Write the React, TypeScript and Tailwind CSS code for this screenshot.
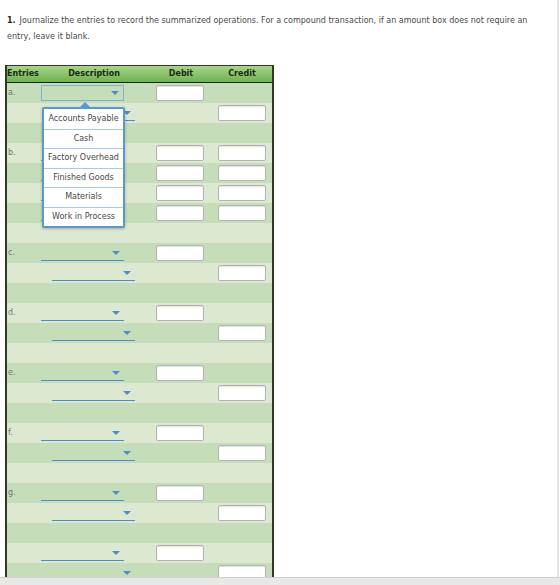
import React from "react";

type Line = { debit: boolean; credit: boolean; indent: boolean };
type Entry = { label: string; lines: Line[]; blank: boolean };

const ACCOUNTS = [
  "Accounts Payable",
  "Cash",
  "Factory Overhead",
  "Finished Goods",
  "Materials",
  "Work in Process",
];

const pair: Line[] = [
  { debit: true, credit: false, indent: false },
  { debit: false, credit: true, indent: true },
];

const ENTRIES: Entry[] = [
  { label: "a.", lines: pair, blank: true },
  {
    label: "b.",
    lines: [0, 1, 2, 3].map(() => ({ debit: true, credit: true, indent: false })),
    blank: true,
  },
  { label: "c.", lines: pair, blank: true },
  { label: "d.", lines: pair, blank: true },
  { label: "e.", lines: pair, blank: true },
  { label: "f.", lines: pair, blank: true },
  { label: "g.", lines: pair, blank: true },
  { label: "", lines: pair, blank: false },
];

const Arrow = () => (
  <span className="h-0 w-0 border-x-[4px] border-t-[4px] border-x-transparent border-t-[#4a8ed0]" />
);

const AmountBox = () => (
  <div className="h-[16px] w-[48px] rounded-[2px] border border-[#b4b4b4] bg-white shadow-[inset_0_1px_1px_rgba(0,0,0,0.12)]" />
);

function AccountMenu() {
  return (
    <div className="absolute left-[1px] top-[22px] z-10 w-[83px]">
      <span className="absolute -top-[5px] left-[38px] h-0 w-0 border-x-[5px] border-b-[5px] border-x-transparent border-b-[#5a98d2]" />
      <ul className="rounded-[2px] border-2 border-[#5a98d2] bg-white shadow-[0_1px_3px_rgba(0,0,0,0.25)]">
        {ACCOUNTS.map((name, i) => (
          <li
            key={name}
            className={`flex h-[19.5px] items-center justify-center text-[8px] text-[#484848] ${
              i > 0 ? "border-t border-[#a9c9e9]" : ""
            }`}
          >
            {name}
          </li>
        ))}
      </ul>
    </div>
  );
}

function Dropdown({ indent, open }: { indent: boolean; open?: boolean }) {
  return (
    <div className={`relative ${indent ? "ml-[14px]" : "ml-[3px]"}`}>
      <div
        className={`flex h-[16px] w-[83px] items-center justify-end pr-[4px] ${
          open ? "border border-[#7fb1df]" : "border-b border-[#4a8ed0]"
        }`}
      >
        <Arrow />
      </div>
      {open && <AccountMenu />}
    </div>
  );
}

export default function App() {
  let rowIndex = 0;
  const rows: React.ReactNode[] = [];

  ENTRIES.forEach((entry, e) => {
    entry.lines.forEach((line, l) => {
      const dark = rowIndex % 2 === 0;
      rows.push(
        <div
          key={`${e}-${l}`}
          className={`grid h-[20px] grid-cols-[31px_112px_62px_60px] items-center ${
            dark ? "bg-[#c6ddba]" : "bg-[#dde8d1]"
          }`}
        >
          <span className="pl-[1px] text-[8px] text-[#757575]">{l === 0 ? entry.label : ""}</span>
          <Dropdown indent={line.indent} open={e === 0 && l === 0} />
          <div className="pl-[6px]">{line.debit && <AmountBox />}</div>
          <div className="pl-[6px]">{line.credit && <AmountBox />}</div>
        </div>
      );
      rowIndex++;
    });
    if (entry.blank) {
      const dark = rowIndex % 2 === 0;
      rows.push(
        <div key={`${e}-blank`} className={`h-[20px] ${dark ? "bg-[#c6ddba]" : "bg-[#dde8d1]"}`} />
      );
      rowIndex++;
    }
  });

  return (
    <div className="flex h-[585px] w-[560px] flex-col bg-white font-['DejaVu_Sans',sans-serif] text-[#333]">
      <div className="flex min-h-0 flex-1">
        <div className="min-w-0 flex-1 overflow-hidden pl-[5px] pt-[13px]">
          <p className="w-[530px] pl-[2px] text-[8px] leading-[16px] text-[#4a4a4a]">
            <span className="mr-[4px] font-bold text-[#2a2a2a]">1.</span>
            Journalize the entries to record the summarized operations. For a compound transaction, if an
            amount box does not require an entry, leave it blank.
          </p>

          <div className="mt-[20px] w-[269px] border-x-2 border-t border-[#2e3a26]">
            <div className="grid h-[17px] grid-cols-[31px_112px_62px_60px] items-center border-b border-[#1b2414] bg-gradient-to-b from-[#a6d68a] to-[#6fb24f] text-[8px] font-bold text-[#1d2a14]">
              <span>Entries</span>
              <span className="text-center">Description</span>
              <span className="text-center">Debit</span>
              <span className="text-center">Credit</span>
            </div>
            {rows}
          </div>
        </div>
        <div className="mr-px w-[2px] bg-[#e4e4e4]" />
      </div>
      <div className="h-[8px] border-t border-[#d0d0d0] bg-[#e8e8e8]" />
    </div>
  );
}
